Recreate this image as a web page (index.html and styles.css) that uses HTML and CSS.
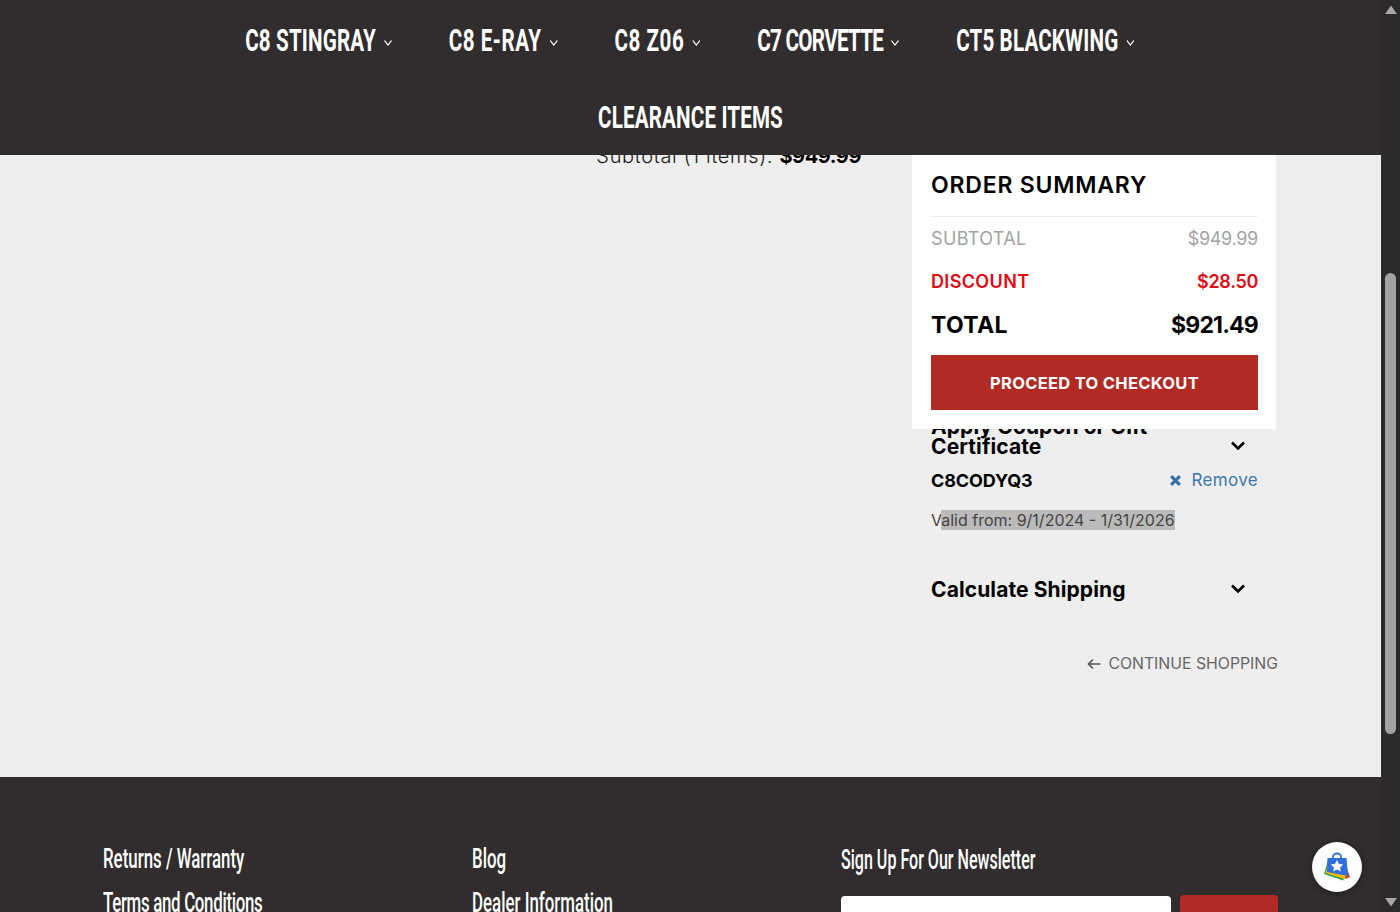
FILE: index.html
```html
<!DOCTYPE html>
<html lang="en">
<head>
<meta charset="utf-8">
<title>Cart</title>
<link rel="stylesheet" href="styles.css">
</head>
<body>
<div class="app">
  <div class="page">
    <header class="site-header">
      <nav class="nav-row nav-row-first">
        <a class="nav-item">C8 STINGRAY<svg class="nav-chev" viewBox="0 0 14 8"><path d="M1.5 1.5 7 6l5.500-4.500"/></svg></a>
        <a class="nav-item nav-item-loose">C8 E-RAY<svg class="nav-chev" viewBox="0 0 14 8"><path d="M1.5 1.5 7 6l5.500-4.500"/></svg></a>
        <a class="nav-item nav-item-loose">C8 Z06<svg class="nav-chev" viewBox="0 0 14 8"><path d="M1.5 1.5 7 6l5.500-4.500"/></svg></a>
        <a class="nav-item nav-item-tight">C7 CORVETTE<svg class="nav-chev" viewBox="0 0 14 8"><path d="M1.5 1.5 7 6l5.500-4.500"/></svg></a>
        <a class="nav-item">CT5 BLACKWING<svg class="nav-chev" viewBox="0 0 14 8"><path d="M1.5 1.500 7 6l5.500-4.500"/></svg></a>
      </nav>
      <nav class="nav-row nav-row-second">
        <a class="nav-item">CLEARANCE ITEMS</a>
      </nav>
    </header>

    <main class="cart">
      <section class="cart-items">
        <p class="items-subtotal">Subtotal (1 items): <b>$949.99</b></p>
      </section>
      <aside class="cart-side">
        <div class="summary">
          <h2 class="summary-title">ORDER SUMMARY</h2>
          <div class="summary-row row-muted"><span class="row-label">SUBTOTAL</span><span class="row-amount">$949.99</span></div>
          <div class="summary-row row-discount"><span class="row-label">DISCOUNT</span><span class="row-amount">$28.50</span></div>
          <div class="summary-row row-total"><span class="row-label">TOTAL</span><span class="row-amount row-amount-total">$921.49</span></div>
          <button class="checkout">PROCEED TO CHECKOUT</button>
        </div>

        <div class="acc-head acc-coupon">
          <h3 class="acc-title">Apply Coupon or Gift Certificate</h3>
          <svg class="acc-chev" viewBox="0 0 16 11"><path d="M2 2.500 8 8.500l6-6"/></svg>
        </div>
        <div class="coupon-row">
          <span class="coupon-code">C8CODYQ3</span>
          <a class="coupon-remove"><svg class="remove-x" viewBox="0 0 12 12"><path d="M2 2l8 8M10 2l-8 8"/></svg>Remove</a>
        </div>
        <p class="coupon-valid">V<span class="selected">alid from: 9/1/2024 - 1/31/2026</span></p>
        <div class="acc-head acc-shipping">
          <h3 class="acc-title">Calculate Shipping</h3>
          <svg class="acc-chev" viewBox="0 0 16 11"><path d="M2 2.500 8 8.500l6-6"/></svg>
        </div>
        <a class="continue"><svg class="continue-arrow" viewBox="0 0 14 12"><path d="M13.500 6H1.500M6 1.500 1.500 6 6 10.500"/></svg>CONTINUE SHOPPING</a>
      </aside>
    </main>

    <footer class="site-footer">
      <ul class="foot-links">
        <li>Returns / Warranty</li>
        <li class="foot-tight">Terms and Conditions</li>
      </ul>
      <ul class="foot-links">
        <li>Blog</li>
        <li>Dealer Information</li>
      </ul>
      <div class="newsletter">
        <h4 class="news-title">Sign Up For Our Newsletter</h4>
        <div class="news-form">
          <div class="news-input"></div>
          <div class="news-button"></div>
        </div>
      </div>
    </footer>
  </div>

  <div class="scrollbar">
    <svg class="sb-arrow" viewBox="0 0 12 9"><path d="M6 0.500 12 9H0z"/></svg>
    <div class="sb-track"><div class="sb-thumb"></div></div>
    <svg class="sb-arrow" viewBox="0 0 12 9"><path d="M0 0h12L6 8.500z"/></svg>
  </div>

  <div class="bag-bubble">
    <svg class="bag-icon" viewBox="0 0 30 30">
      <path d="M22 8l6 17-5 2z" fill="#d8312f"/>
      <path d="M2 22 21 28.500 24 24 6 8z" fill="#2fa44f"/>
      <path d="M3.500 21 22 27 25 23 7 8z" fill="#f4b90b"/>
      <path d="M5.500 6H24.500L26 24 5 20z" fill="#2f6fe0"/>
      <path d="M11 7V4.500a4 3 0 0 1 8 0V7" fill="none" stroke="#2f6fe0" stroke-width="1.800"/>
      <path d="m15 8 1.900 3.800 4.200.6-3 3 .7 4.200-3.800-2-3.800 2 .7-4.200-3-3 4.200-.6z" fill="#fff"/>
    </svg>
  </div>
</div>
</body>
</html>
```
FILE: styles.css
```css
* { box-sizing: border-box; }
html, body { margin: 0; padding: 0; height: 912px; overflow: hidden; background: #312d2e; }
body { font-family: Inter, "Open Sans", sans-serif; color: #000; }
h2, h3, h4, p, ul { margin: 0; padding: 0; }
ul { list-style: none; }

.app { display: flex; width: 1400px; height: 912px; overflow: hidden; position: relative; }
.page { width: 1381px; flex: none; position: relative; height: 912px; overflow: hidden; }

/* header */
.site-header { position: absolute; top: 0; left: 0; right: 0; height: 155px; background: #312d2e; z-index: 5; }
.nav-row { display: flex; justify-content: center; height: 77px; align-items: center; transform-origin: 50% 50%; transform: scaleX(0.645); gap: 86px; }
.nav-row-first { margin-top: 1px; }
.nav-item { font-family: Roboto, sans-serif; font-weight: 700; font-size: 32px; line-height: 1; color: #fff; white-space: nowrap; display: flex; align-items: center; letter-spacing: 0.2px; }
.nav-item-loose { letter-spacing: 0.8px; }
.nav-item-tight { letter-spacing: -1.100px; }
.nav-chev { width: 17px; height: 8px; margin-left: 10px; margin-top: 6px; fill: none; stroke: #fff; stroke-width: 1.600; }

/* main */
.cart { height: 777px; background: #eee; display: flex; padding: 0 123px 0 0; gap: 70px; }
.cart-items { flex: 1; display: flex; justify-content: flex-end; align-items: flex-start; padding-top: 143px; }
.items-subtotal { font-size: 20px; line-height: 26px; color: #222; white-space: nowrap; font-weight: 300; letter-spacing: 0.65px; }
.items-subtotal b { font-weight: 700; color: #000; letter-spacing: -0.4px; }
.cart-side { width: 327px; flex: none; position: relative; padding-top: 417px; }

.summary { position: absolute; left: -19px; top: 155px; width: 364px; height: 274px; background: #fff; padding: 0 18px 0 19px; z-index: 2; }
.summary-title { font-size: 23px; line-height: 28px; font-weight: 600; padding: 16px 0 17px; height: 62px; border-bottom: 1px solid #eee; letter-spacing: 0.8px; white-space: nowrap; }
.summary-row { display: flex; justify-content: space-between; align-items: center; }
.row-muted { color: #a3a3a3; font-size: 18px; height: 43px; }
.row-discount { color: #e30613; font-size: 18px; font-weight: 600; height: 43px; }
.row-total { font-size: 23px; font-weight: 700; height: 44px; }
.row-label { letter-spacing: 0.35px; }
.row-amount { letter-spacing: -0.3px; }
.row-amount-total { letter-spacing: -0.8px; }
.checkout { display: block; width: 100%; height: 55px; background: #b12a24; color: #fff; border: 0; font-family: inherit; font-size: 16.500px; font-weight: 700; letter-spacing: 0.3px; padding: 0; margin-top: 8px; }

.acc-head { display: flex; align-items: flex-end; justify-content: space-between; }
.acc-title { font-size: 21px; line-height: 20px; font-weight: 700; color: #000; letter-spacing: 0.1px; }
.acc-coupon .acc-title { width: 240px; }
.acc-chev { width: 16px; height: 11px; margin-right: 12px; margin-bottom: 6px; fill: none; stroke: #000; stroke-width: 2.600; }
.coupon-row { display: flex; justify-content: space-between; align-items: center; height: 22px; margin-top: 12px; }
.coupon-code { font-size: 18px; font-weight: 700; letter-spacing: -0.1px; }
.coupon-remove { font-size: 17px; color: #3c78ab; display: flex; align-items: center; font-weight: 400; letter-spacing: 0.35px; }
.remove-x { width: 13px; height: 13px; margin-right: 9px; fill: none; stroke: #3472a8; stroke-width: 3; }
.coupon-valid { font-size: 16px; line-height: 20px; color: #444; margin-top: 19px; white-space: nowrap; }
.selected { background: #bbb; }
.acc-shipping { margin-top: 50px; }
.continue { position: absolute; right: -20px; top: 654px; display: flex; align-items: center; font-size: 15.800px; line-height: 20px; color: #666; white-space: nowrap; }
.continue-arrow { width: 14px; height: 12px; margin-right: 7px; fill: none; stroke: #555; stroke-width: 1.700; }

/* footer */
.site-footer { height: 135px; background: #312d2e; display: grid; grid-template-columns: 369px 369px 437px; padding: 65px 0 0 103px; overflow: hidden; }
.foot-links, .news-title { font-family: Roboto, sans-serif; color: #fff; transform-origin: 0 0; white-space: nowrap; }
.foot-links { font-size: 27px; line-height: 44px; transform: scaleX(0.625); margin-top: -5px; font-weight: 500; }
.foot-links li { height: 44px; }
.foot-links .foot-tight { letter-spacing: -0.5px; }
.news-title { font-size: 27px; line-height: 36px; font-weight: 500; transform: scaleX(0.595); }
.news-form { display: flex; gap: 9px; margin-top: 17px; align-items: flex-start; }
.news-input { width: 330px; height: 40px; background: #fff; border-radius: 4px; margin-top: 1px; }
.news-button { width: 98px; height: 40px; background: #b12a24; border-radius: 4px; }

/* scrollbar */
.scrollbar { width: 19px; flex: none; background: #2b2b2b; display: flex; flex-direction: column; align-items: center; height: 912px; }
.sb-arrow { width: 12px; height: 9px; fill: #a8a8a8; margin: 5px 0; flex: none; }
.sb-track { flex: 1; width: 100%; position: relative; }
.sb-thumb { position: absolute; left: 4px; width: 11px; top: 254px; height: 461px; background: #a3a3a3; border-radius: 6px; }

/* floating bag */
.bag-bubble { position: absolute; left: 1312px; top: 842px; width: 50px; height: 50px; border-radius: 50%; background: #fff; display: flex; align-items: center; justify-content: center; box-shadow: 0 1px 6px rgba(0,0,0,.4); z-index: 9; }
.bag-icon { width: 30px; height: 30px; }
```
